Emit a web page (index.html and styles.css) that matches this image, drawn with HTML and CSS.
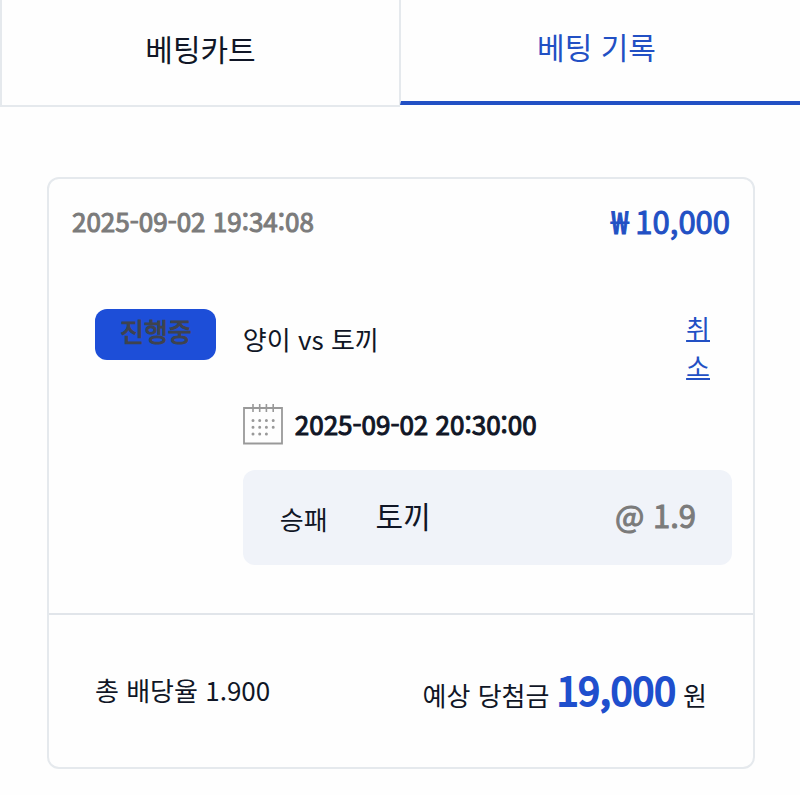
FILE: index.html
```html
<!DOCTYPE html>
<html lang="ko">
<head>
<meta charset="utf-8">
<meta name="viewport" content="width=device-width, initial-scale=1">
<title>베팅 기록</title>
<link rel="stylesheet" href="styles.css">
</head>
<body>
<nav class="tabs">
  <button class="tab" type="button">베팅카트</button>
  <button class="tab tab-active" type="button">베팅 기록</button>
</nav>
<main class="history">
  <article class="card">
    <header class="card-header">
      <time class="placed">2025-09-02 19:34:08</time>
      <strong class="stake">₩ 10,000</strong>
    </header>
    <section class="card-body">
      <span class="badge">진행중</span>
      <div class="match">
        <div class="match-top">
          <span class="teams">양이 vs 토끼</span>
          <a class="cancel" href="#">취<br>소</a>
        </div>
        <div class="kickoff">
          <svg class="calendar" viewBox="0 0 40 42" aria-hidden="true">
            <path d="M1 5H39V40.500H1Z" fill="none" stroke="#999" stroke-width="1.800"/>
            <path d="M10 1V9M16.700 1V9M23.400 1V9M30.200 1V9" fill="none" stroke="#999" stroke-width="1.600"/>
            <path d="M10 17.500h0M16.700 17.500h0M23.400 17.500h0M30.200 17.500h0M10 24.200h0M16.700 24.200h0M23.400 24.200h0M30.200 24.200h0M10 30.900h0M16.700 30.900h0M23.400 30.900h0" fill="none" stroke="#999" stroke-width="3" stroke-linecap="round"/>
          </svg>
          <time>2025-09-02 20:30:00</time>
        </div>
        <div class="pick">
          <span class="market">승패</span>
          <span class="choice">토끼</span>
          <span class="odds">@ 1.9</span>
        </div>
      </div>
    </section>
    <footer class="card-footer">
      <span class="total">총 배당율 1.900</span>
      <span class="payout">예상 당첨금 <strong class="prize">19,000</strong> 원</span>
    </footer>
  </article>
</main>
</body>
</html>
```

FILE: styles.css
```css
* {
  box-sizing: border-box;
}

body {
  margin: 0;
  background: #fefefe;
  color: #101626;
  font-family: "Noto Sans CJK KR", sans-serif;
  font-size: 26px;
  line-height: 38px;
}

.tabs {
  display: grid;
  grid-template-columns: 1fr 1fr;
}

.tab {
  height: 107px;
  padding: 0 0 10px;
  border: solid #e5e9ed;
  border-width: 0 1px 2px 2px;
  background: none;
  color: inherit;
  font: inherit;
  font-size: 30px;
}

.tab-active {
  height: 105px;
  padding-right: 8px;
  border-width: 0 0 4px 1px;
  border-bottom-color: #2250c4;
  color: #2250c4;
}

.history {
  padding: 70px 45px 26px 47px;
}

.card {
  border: 2px solid #e5e9ed;
  border-radius: 12px;
}

.card-header {
  display: flex;
  justify-content: space-between;
  align-items: center;
  padding: 23px 23px 0;
}

.placed,
.stake,
.badge,
.kickoff,
.odds,
.prize {
  font-weight: 400;
  -webkit-text-stroke: 1px currentColor;
}

.placed {
  color: #7b7b7b;
}

.stake {
  color: #2250c4;
  font-size: 31px;
}

.card-body {
  display: grid;
  grid-template-columns: auto 1fr;
  align-items: start;
  column-gap: 27px;
  padding: 69px 21px 48px 46px;
}

.badge {
  padding: 3px 24px 10px 25px;
  border-radius: 12px;
  background: #1d4ed8;
  color: #3f434d;
}

.match-top {
  display: flex;
  justify-content: space-between;
  padding-right: 22px;
}

.teams {
  padding-top: 11px;
}

.cancel {
  color: #2250c4;
  text-decoration-thickness: 2px;
}

.kickoff {
  display: flex;
  align-items: center;
  gap: 12px;
  margin-top: 18px;
}

.calendar {
  width: 40px;
  height: 42px;
}

.pick {
  display: flex;
  align-items: center;
  margin-top: 25px;
  padding: 22px 36px 27px 37px;
  border-radius: 12px;
  background: #f0f3f9;
}

.market {
  padding-top: 8px;
}

.choice {
  margin-left: 48px;
  font-size: 30px;
}

.odds {
  margin-left: auto;
  color: #7b7b7b;
  font-size: 31px;
}

.card-footer {
  display: flex;
  justify-content: space-between;
  align-items: center;
  padding: 48px 46px;
  border-top: 2px solid #e1e5ea;
}

.total {
  padding-bottom: 2px;
}

.payout {
  padding-top: 2px;
  line-height: 48px;
}

.prize {
  color: #1f4fcd;
  font-size: 39px;
  -webkit-text-stroke-width: 2px;
}
```
